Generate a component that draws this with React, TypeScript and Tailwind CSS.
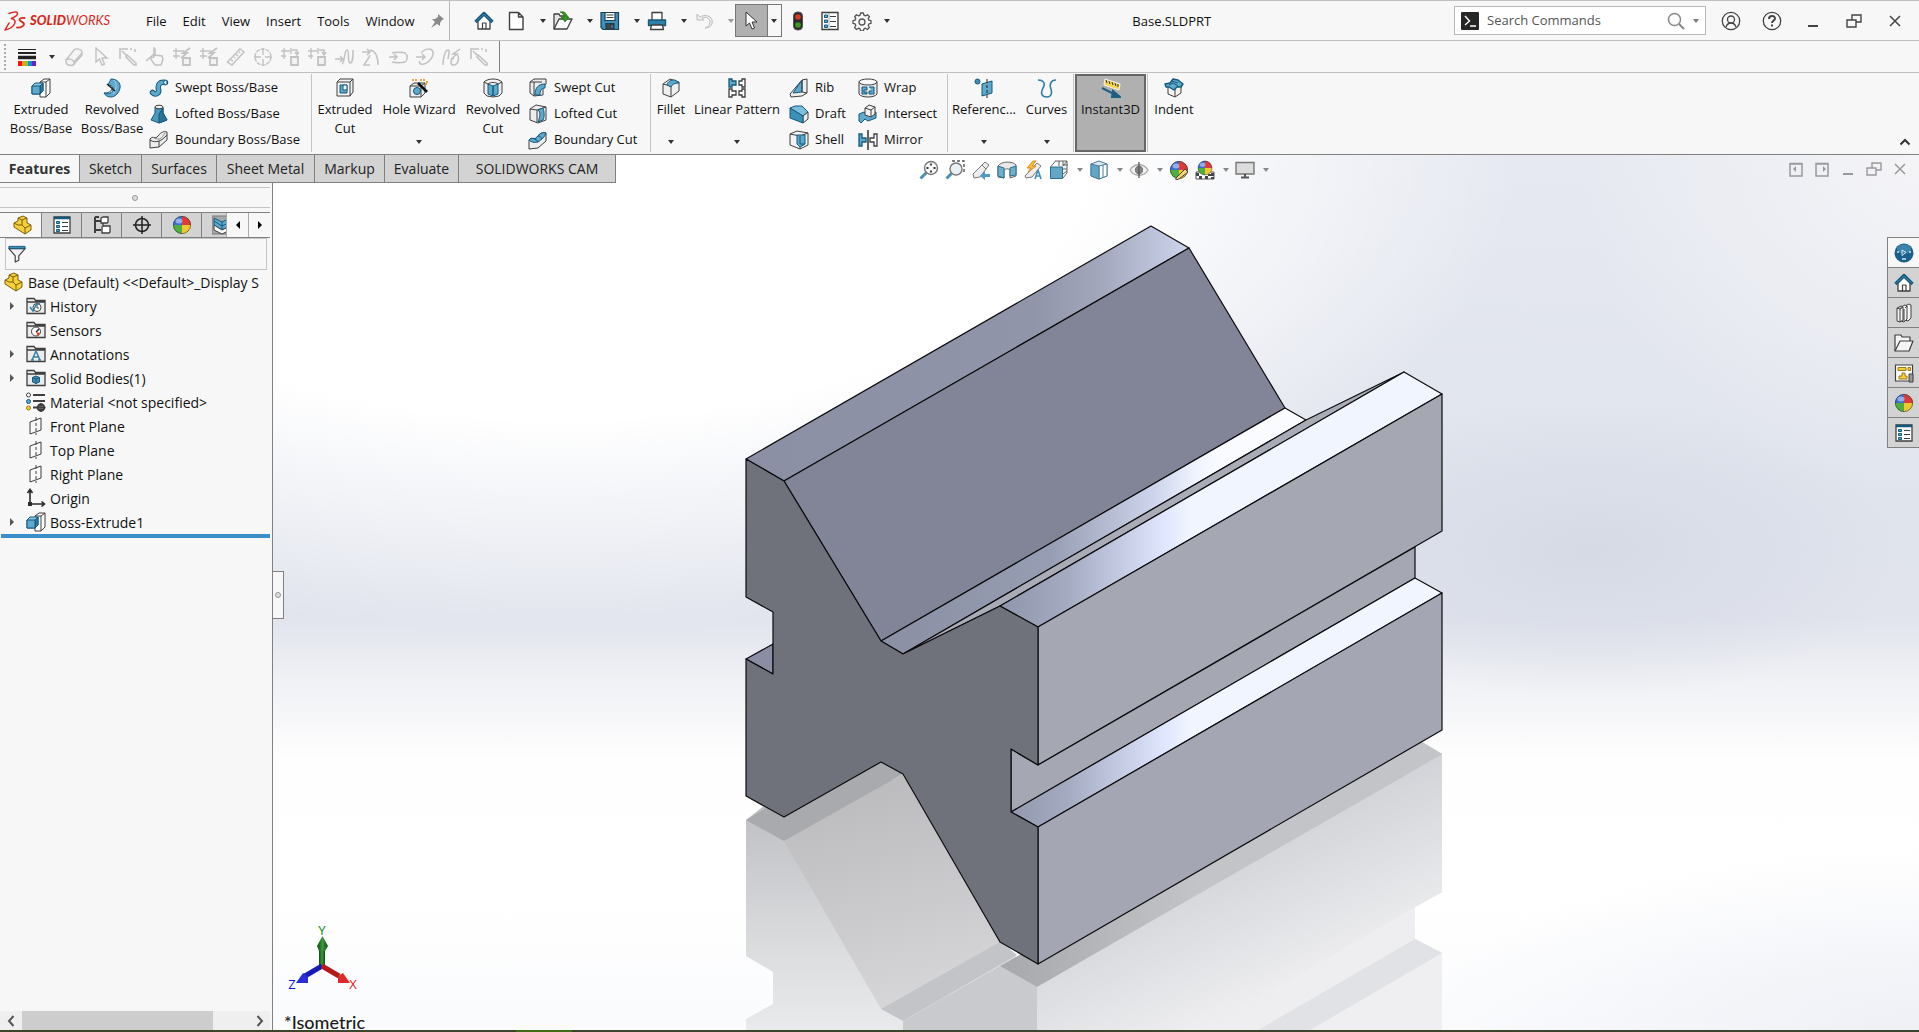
import { type ReactNode } from 'react'
import clsx from 'clsx'

const line = '#3f3f3f'
const blue = '#5fa9cc'
const navy = '#14597c'

const box = (
  <g stroke={line} strokeLinejoin="round">
    <path d="M9 4l4-3h6v14l-4 4H9z" fill="#fdfdfd" />
    <path d="M15 4v15M9 4h6l4-3" fill="none" />
    <g stroke={navy}>
      <path d="M1 8l3-3h8v8l-3 3H1z" fill="#8cc8e2" />
      <path d="M9 8l3-3v8l-3 3z" fill="#2f7ba3" />
      <path d="M1 8h8v8H1z" fill={blue} />
    </g>
  </g>
)

const house = (
  <g strokeLinejoin="round">
    <path d="M4 10v8h12v-8l-6-6z" fill="#fff" stroke={line} strokeWidth="1.3" />
    <path d="M8.500 18v-6h3.500v6" fill="none" stroke={line} strokeWidth="1.200" />
    <path d="M1.500 11L10 2.500l8.500 8.500" fill="none" stroke={navy} strokeWidth="3.200" />
    <path d="M2.500 10L10 3l7.500 7" fill="none" stroke="#3d8fb9" strokeWidth="1" />
  </g>
)

const part = (
  <g fill="#f6cf3c" stroke="#7d5f0a" strokeLinejoin="round">
    <path d="M1 8l4-2V3l5-2 4 2v5l4 2v5l-6 4-11-7z" />
    <path d="M5 3l4 2 5-2M9 5v5l3 3 6-3M12 13v6M1 8l4 2 4 0" fill="none" />
  </g>
)

const ball = (
  <g>
    <path d="M10 10V1a9 9 0 0 1 9 9z" fill="#e03a36" />
    <path d="M10 10h9a9 9 0 0 1-9 9z" fill="#f2c832" />
    <path d="M10 10v9a9 9 0 0 1-9-9z" fill="#4caf3f" />
    <path d="M10 10H1a9 9 0 0 1 9-9z" fill="#3b6fd6" />
    <circle cx="10" cy="10" r="8.600" fill="none" stroke="#333" strokeOpacity=".6" />
    <ellipse cx="7" cy="6" rx="3.500" ry="2.500" fill="#fff" opacity=".45" />
  </g>
)

const folder = <path d="M1 17.500V2.500h7l1.500 2h9.500v13z M1 6h18" fill="#ececec" stroke={line} strokeWidth="1.300" />

const list = (
  <g stroke={line}>
    <path d="M2 2h16v16H2z" fill="#fff" strokeWidth="1.300" />
    <path d="M2 3h16" stroke={navy} strokeWidth="2.500" />
    <path d="M4.500 6.500h3v2h-3zM4.500 10.500h3v2h-3zM4.500 14.500h3v2h-3z" fill={blue} stroke={navy} />
    <path d="M10 7.500h6M10 11.500h6M10 15.500h6" />
  </g>
)

const plane = (
  <g fill="none" stroke={line}>
    <path d="M4 6l11-4v12L4 18z" fill="#f8f8f8" />
    <path d="M10 1v4M10 7v3M10 12v3M10 17v2" />
  </g>
)

const trimSquares = (
  <g fill="none" stroke="currentColor" strokeWidth="1.400">
    <path d="M1 4h9M4 1v11M1 9h5M11 1v6M12 3h5v4M15 5l2 3 2-3" />
    <path d="M11 10h7v8h-7z" fill="#f2f2f2" strokeWidth="1.800" />
  </g>
)

const pencil = (
  <g fill="none" stroke="currentColor" strokeWidth="1.600">
    <path d="M2 12V2h8M12 2h2M17 2v3M4 4l5 5M9 8l9 8v2h-2L8 10z" />
  </g>
)

const icons: Record<string, ReactNode> = {
  box,
  house,
  part,
  ball,
  list,
  plane,
  trimSquares,
  pencil,
  revolve: (
    <g stroke={navy} strokeLinejoin="round">
      <path d="M9 1c6 0 10 4 9 9s-5 9-9 9-6-2-7-4c4 2 9 0 9-4 0-3-3-4-5-4z" fill={blue} />
      <path d="M12 2c3 3 3 9-1 14" fill="none" stroke="#9fd3ea" />
      <path d="M5 6l8 7" stroke="#222" strokeWidth="1.500" />
      <path d="M2 15c4 0 7-1 8-4" fill="none" />
    </g>
  ),
  sweep: (
    <g fill="none" strokeLinecap="round">
      <path d="M3.500 14.500c3 3 7 1 6-3-1-5 1-8 7-7" stroke={navy} strokeWidth="5.500" />
      <path d="M3.500 14.500c3 3 7 1 6-3-1-5 1-8 7-7" stroke={blue} strokeWidth="3.500" />
      <ellipse cx="16.500" cy="4.500" rx="1.800" ry="2.200" fill="#d9eef7" stroke={navy} />
    </g>
  ),
  loft: (
    <g stroke={navy} strokeLinejoin="round">
      <path d="M6 3v6l-4 7 8 3 8-3-4-7V3z" fill="#4b97bd" />
      <path d="M10 10v9l8-3-4-7V4z" fill="#2d7396" />
      <ellipse cx="10" cy="3" rx="4" ry="1.800" fill="#eee" stroke={line} />
    </g>
  ),
  boundary: (
    <g stroke={line} fill="#ededed" strokeLinejoin="round">
      <path d="M1 9c3-4 5 1 8-3 3-4 6-5 9-4v8l-8 7-9 1z" />
      <path d="M1 10c3 2 6 2 9 1M10 11v6M10 11c3-1 5-3 8-6" fill="none" />
      <path d="M4 7c2 2 4 2 6 2s4-3 6-6" fill="none" stroke="#8a8a8a" />
    </g>
  ),
  boundaryCut: (
    <g stroke={line} fill="#ededed" strokeLinejoin="round">
      <path d="M1 10c3-4 5 1 8-3 3-4 6-5 9-4v8l-8 7-9 1z" />
      <path d="M1 10c3-4 5 1 8-3 3-4 6-5 9-4-1 4-5 7-8 9-4 1-7 0-9-2z" fill={blue} stroke={navy} />
      <path d="M5 8c2 2 4 1 5 4M10 6c2 0 3 1 4 3" fill="none" stroke={navy} />
    </g>
  ),
  cut: (
    <g stroke={line} strokeLinejoin="round">
      <path d="M2 4l3-3h13v13l-3 4H2z" fill="#f4f4f4" />
      <path d="M2 4h13v14M15 4l3-3" fill="none" />
      <path d="M5 7h7v8H5z" fill={blue} stroke={navy} />
      <path d="M8 7h4v5H8z" fill="#eef8fc" stroke={navy} />
    </g>
  ),
  wizard: (
    <g stroke={line} strokeLinejoin="round">
      <path d="M1 8l4-3h11v10l-4 4H1z" fill="#ececec" />
      <path d="M1 8h11v11M12 8l4-3" fill="none" />
      <circle cx="8" cy="13" r="3.500" fill={blue} stroke={navy} />
      <path d="M9 5l9 9" stroke="#111" strokeWidth="2.600" />
      <path d="M3 2h2M7 1v2M11 2h2M15 1v2M18 3v2M16 6h2" stroke="#e0901c" strokeWidth="1.600" />
    </g>
  ),
  revolveCut: (
    <g stroke={line} strokeLinejoin="round">
      <path d="M1 4c4-4 14-4 18 0v11l-3 3-6 1-6-1-3-3z" fill="#f1f1f1" />
      <path d="M5 6l5 2v10l-5-2zM15 6l-5 2v10l5-2z" fill={blue} stroke={navy} />
      <path d="M1 4l4 2M19 4l-4 2M5 6c2-2 8-2 10 0" fill="none" />
    </g>
  ),
  sweptCut: (
    <g stroke={line} strokeLinejoin="round">
      <path d="M2 4l4-3h12v5l-3 3v8l-9 1-4-3z" fill="#ededed" />
      <path d="M7 17c0-7 3-11 10-11v4c-4 0-5 3-5 7z" fill={blue} stroke={navy} />
      <path d="M2 4h12M6 4v14" fill="none" />
    </g>
  ),
  loftCut: (
    <g stroke={line} strokeLinejoin="round">
      <path d="M2 5l6-4 10 2v13l-8 3-8-3z" fill="#ededed" />
      <path d="M2 5l7 1v12M9 6l9-3" fill="none" />
      <path d="M10 6c3 2 2 7 0 12l5-2c2-4 1-9 0-12z" fill={blue} stroke={navy} />
    </g>
  ),
  fillet: (
    <g stroke={line} strokeLinejoin="round">
      <path d="M2 6l7-5 9 3v9l-8 6-8-3z" fill="#efefef" />
      <path d="M2 6l8 2v11" fill="none" />
      <path d="M6 7c1-4 4-5 8-5l4 3c-4 0-7 1-8 4z" fill={blue} stroke={navy} />
    </g>
  ),
  linearPattern: (
    <g fill="#fff" stroke={line} strokeWidth="1.300">
      <path d="M2 1h3v2h4v4H5v2H2z" fill={blue} stroke={navy} />
      <path d="M18 1v8h-3V7h-3V3h3V1zM2 11h3v2h4v4H5v2H2zM18 11v8h-3v-2h-3v-4h3v-2z" />
    </g>
  ),
  rib: (
    <g stroke={line} strokeLinejoin="round">
      <path d="M13 2l5-1v14l-5 3-11 1-1-3z" fill="#ededed" />
      <path d="M4 15L13 2v12z" fill={blue} stroke={navy} />
      <path d="M13 2v12l5 1" fill="none" />
    </g>
  ),
  draft: (
    <g stroke={navy} strokeLinejoin="round">
      <path d="M1 4l5-2h7l6 6-5 4z" fill="#7cc0de" />
      <path d="M14 12l5-4v7l-5 4z" fill="#ededed" stroke={line} />
      <path d="M1 4l13 8v7L1 14z" fill="#3c8fb7" />
    </g>
  ),
  shell: (
    <g stroke={line} strokeLinejoin="round">
      <path d="M1 4l7-3 11 2v12l-8 4-10-4z" fill="#f3f3f3" />
      <path d="M1 4l10 2v13M11 6l8-3" fill="none" />
      <path d="M8 5h8v9l-5 3-3-3z" fill={blue} stroke={navy} />
      <path d="M11 6v8l5 0" fill="none" stroke={navy} />
    </g>
  ),
  wrap: (
    <g stroke={line}>
      <path d="M1 4v12c2 4 16 4 18 0V4z" fill="#e9e9e9" />
      <ellipse cx="10" cy="4" rx="9" ry="3" fill="#f8f8f8" />
      <path d="M4 9h5v3H6v2h3v2H4zM11 9h5v7h-5v-3h3" fill={blue} stroke={navy} />
    </g>
  ),
  intersect: (
    <g stroke={line} strokeLinejoin="round">
      <path d="M1 10l5-2 4 3 8-3v6l-8 3-3-2-4 4-2-2z" fill={blue} stroke={navy} />
      <path d="M7 4l4-3 6 2v7l-4 3-6-2z" fill="#f3f3f3" />
      <path d="M7 4l6 2v7M13 6l4-3" fill="none" />
    </g>
  ),
  mirror: (
    <g stroke={line} strokeWidth="1.300">
      <path d="M1 4h3v4h4v4H4v4H1z" fill={blue} stroke={navy} />
      <path d="M10 0v20" stroke="#111" />
      <path d="M19 4v12h-3v-4h-4V8h4V4z" fill="#fff" />
    </g>
  ),
  reference: (
    <g stroke={navy}>
      <circle cx="3.500" cy="3.500" r="2.500" fill="#3f8fb8" />
      <path d="M8 6l10-3v12L8 18z" fill={blue} />
      <path d="M13 1v4M13 7v3M13 12v3M13 17v3" stroke="#222" />
    </g>
  ),
  curves: (
    <g fill="none" stroke="#2e7ea8" strokeWidth="1.600">
      <path d="M1 2c5 0 8 3 5 8-3 6-1 9 4 9 5 0 5-5 4-8-2-5 0-9 5-9" />
    </g>
  ),
  instant: (
    <g>
      <path d="M4 1l15 5-1 6L3 7z" fill="#f8d548" stroke="#f3f3f3" />
      <path d="M5 2l1 3M8 3l1 3M11 4l1 3M14 5l1 3M17 6l0 3" stroke="#333" />
      <path d="M1 10l12 6M12 13l7 6h-8z" fill="#1d5f85" stroke="#1d5f85" strokeWidth="2" />
    </g>
  ),
  indent: (
    <g stroke={line} strokeLinejoin="round">
      <path d="M4 8v8l7 3 6-4V7z" fill="#f2f2f2" />
      <path d="M11 10v9" />
      <path d="M1 6l5-1 3-4 5 1 5 4-2 3-4 0-3 3-5-3-3 0z" fill={blue} stroke={navy} strokeWidth="1.400" />
      <path d="M5 7l4-2 5 3M8 3l6 2" fill="none" stroke={navy} />
    </g>
  ),
  newDoc: (
    <path d="M3.500 1.500h9l4.500 4.500v12.500H3.500zM12.500 1.500V6H17" fill="#fff" stroke={line} strokeWidth="1.400" strokeLinejoin="round" />
  ),
  open: (
    <g stroke={line} strokeLinejoin="round">
      <path d="M1 18V3h5l1 2h7v4" fill="#e6e6e6" strokeWidth="1.300" />
      <path d="M1 18l5-10h13l-5 10z" fill="#fafafa" strokeWidth="1.300" />
      <path d="M7 1c4-1 7 1 7 5h2l-4 5-4-5h3c0-2-1-4-4-5z" fill="#2f9a1c" stroke="#1f6d12" strokeWidth=".6" />
    </g>
  ),
  save: (
    <g stroke="#1c3f55" strokeWidth="1.200">
      <path d="M1 1.500h17.500V18.500H3L1 16.500z" fill="#3f8fb8" />
      <path d="M5 1.500h10v8H5z" fill="#fff" />
      <path d="M6.500 4h7M6.500 6.500h7" stroke={line} />
      <path d="M6 12.500h8v6H6z" fill="#444" />
      <path d="M11 14h2v3h-2z" fill="#cfe6f2" />
    </g>
  ),
  print: (
    <g stroke={line} strokeLinejoin="round">
      <path d="M5 9V1.500h10V9" fill="#fff" strokeWidth="1.300" />
      <path d="M1.500 9h17v5.500h-17z" fill="#2f81a8" stroke={navy} strokeWidth="1.400" />
      <path d="M4.500 14h11l1 4.500h-13z" fill="#fff" strokeWidth="1.300" />
    </g>
  ),
  undo: (
    <path d="M3 3v6h7L8 7c5-2 8 1 8 4s-2 5-5 6c8 0 9-8 5-11-3-2-7-2-10 0z" fill="#efefef" stroke="#bcbcbc" />
  ),
  cursor: <path d="M5 1v14l3.500-3 2.500 6 2.500-1-2.500-6h5z" fill="#fff" stroke="#333" strokeLinejoin="round" />,
  traffic: (
    <g>
      <rect x="5.500" y="1" width="9" height="18" rx="4" fill="#2b2b2b" stroke="#555" />
      <circle cx="10" cy="6" r="2.800" fill="#e0381c" />
      <circle cx="10" cy="14" r="2.800" fill="#3f9a24" />
    </g>
  ),
  options: (
    <g stroke={line}>
      <path d="M2 1.500h16v17H2z" fill="#fff" strokeWidth="1.400" />
      <path d="M4.500 4h3v2.500h-3zM4.500 9h3v2.500h-3zM4.500 14h3v2.500h-3z" fill={blue} stroke={navy} />
      <path d="M10 5.500h6M10 10.500h6M10 15.500h6" />
      <path d="M9 2v16" stroke="#aaa" />
    </g>
  ),
  gear: (
    <g fill="none" stroke="#555" strokeWidth="1.300" strokeLinejoin="round">
      <path d="M8.600 2h2.800l.5 2.200 1.600.7 2-1.200 2 2-1.300 1.900.7 1.600 2.100.5v2.700l-2.100.5-.7 1.600 1.200 2-2 2-1.900-1.300-1.600.7-.5 2.100H8.600l-.5-2.100-1.600-.7-2 1.300-1.900-2 1.200-2-.7-1.600L1 12.400V9.700l2.100-.5.7-1.600-1.200-1.900 1.900-2 2 1.200 1.600-.7z" />
      <circle cx="10" cy="11" r="3" />
    </g>
  ),
  lineStyle: (
    <g>
      <path d="M1 2.500h18" stroke="#222" strokeWidth="1" />
      <path d="M1 6h18" stroke="#222" strokeWidth="2" />
      <path d="M1 10.500h18" stroke="#222" strokeWidth="3.500" />
      <path d="M1 14h4v5H1z" fill="#f01414" />
      <path d="M5 14h3v5H5z" fill="#f59a0c" />
      <path d="M8 14h3v5H8z" fill="#8bc63e" />
      <path d="M11 14h4v5h-4z" fill="#188ac8" />
      <path d="M15 14h4v5h-4z" fill="#6a1fd0" />
    </g>
  ),
  eraser: (
    <g fill="#f4f4f4" stroke="currentColor" strokeWidth="1.400" strokeLinejoin="round">
      <path d="M2 13L10 3c1-2 8-1 8 2v3l-8 9c-2 3-8 1-8-2z" />
      <path d="M2 13c2-2 7-1 8 2l8-9M10 15v3" fill="none" />
    </g>
  ),
  arrow: <path d="M5 1v14l3.500-3 2.500 6 2.500-1-2.500-6h5z" fill="none" stroke="currentColor" strokeWidth="1.400" />,
  hand: (
    <g fill="none" stroke="currentColor" strokeWidth="1.500">
      <path d="M1 14l9-8M9 1v9l-4 1 5 7h6l2-6-1-3-7-1V2z" />
    </g>
  ),
  ruler: <path d="M1.500 15L14 2l4 3L6 18zM5 13l2 1M8 10l1 1M10 7l2 2M13 5l1 1" fill="none" stroke="currentColor" strokeWidth="1.500" />,
  ring: (
    <g fill="none" stroke="currentColor" strokeWidth="1.400">
      <circle cx="10" cy="10" r="8" strokeDasharray="4 1" />
      <path d="M10 1v7M10 12v7M1 10h7M12 10h7" />
    </g>
  ),
  trimCurve: (
    <g fill="none" stroke="currentColor" strokeWidth="1.500">
      <path d="M1 12h7M6 9l3 3-3 3M8 17c3-1 2-14 5-14s0 13 3 13 3-6 3-13" />
    </g>
  ),
  arcCurve: (
    <g fill="none" stroke="currentColor" strokeWidth="1.500">
      <path d="M1 5h8M6 2l3 3-3 3M9 3c6 1 8 7 8 15M9 8c-1 4-4 6-6 10h6" />
    </g>
  ),
  slot: (
    <g fill="none" stroke="currentColor" strokeWidth="1.500">
      <path d="M4 6c2-1 11-1 13 0 3 2 3 7 0 9-3 1-10 1-13 0M1 10h8M6 7l3 3-3 3" />
    </g>
  ),
  oval: (
    <g fill="none" stroke="currentColor" strokeWidth="1.500">
      <path d="M1 10h9M7 7l3 3-3 3M6 6c4-5 11-5 12-1s-4 11-9 12-5-2-4-3" />
    </g>
  ),
  scribble: (
    <g fill="none" stroke="currentColor" strokeWidth="1.500">
      <path d="M1 18c0-6 2-15 5-15 2 0 1 3 0 9M18 2l-7 5h4l-6 5" />
      <path d="M15 8c3 2 1 10-3 10s-4-6 0-7" />
    </g>
  ),
  trimFlash: (
    <g fill="none" stroke="currentColor" strokeWidth="1.400">
      <path d="M1 4h11M4 1v11M1 9h7" />
      <path d="M11 11h7v7h-7z" fill="#f2f2f2" strokeWidth="1.800" />
      <path d="M18 1l-7 5h4l-6 5" strokeWidth="1.800" />
    </g>
  ),
  zoomFit: (
    <g fill="none" stroke="#777" strokeWidth="1.400">
      <path d="M1.500 18.500l6-6" stroke="#4f8fb0" strokeWidth="3" />
      <circle cx="12" cy="8" r="6.500" fill="#f8f8f8" />
      <path d="M12 3.500v2M12 10.500v2M7.500 8h2M14.500 8h2" stroke="#333" strokeWidth="1.800" />
    </g>
  ),
  zoomArea: (
    <g fill="none" stroke="#777" strokeWidth="1.400">
      <path d="M7 1h12v12" strokeDasharray="3 2" stroke="#555" />
      <path d="M1.500 18.500l5-5" stroke="#4f8fb0" strokeWidth="3" />
      <circle cx="11" cy="9" r="6" fill="#eaf0f4" />
    </g>
  ),
  prevView: (
    <g stroke="#777" strokeLinejoin="round">
      <path d="M2 14L14 2l4 3-9 12-6 1z" fill="#ededed" />
      <path d="M11 5l4 4" fill="none" />
      <path d="M19 14h-5v-3l-5 5 5 4v-3h5z" fill="#4f9bc4" stroke="none" />
    </g>
  ),
  section: (
    <g stroke="#666" strokeLinejoin="round">
      <path d="M1 6c3-5 15-5 18-1v11l-6 2v-8c-2-2-5-1-6 0v8l-6-1z" fill="#e8e8e8" />
      <path d="M1 6l6 2v10l-6-2zM19 6l-6 2v8l6-1z" fill="#6fb0cf" stroke="#2e6d8c" />
    </g>
  ),
  dynView: (
    <g strokeLinejoin="round">
      <path d="M2 16L14 3l4 3-9 11-6 1z" fill="#ededed" stroke="#777" />
      <path d="M10 1L4 8h4l-3 4 8-6H9l4-5z" fill="#f9c23a" stroke="#d98a1a" />
      <path d="M12 19l3-9 3 9M13 16h4" fill="none" stroke="#3f8fb8" strokeWidth="1.600" />
    </g>
  ),
  orient: (
    <g stroke="#666">
      <path d="M6 1h12v12l-4 5" fill="#f5f5f5" />
      <path d="M10 1v5M14 1v5M14 5h5M14 9h4M14 6l4-5M14 14l4-3" fill="none" />
      <path d="M1.500 7h12v11.500h-12z" fill="#63a7c7" stroke="#2e6d8c" />
      <path d="M1.500 7l5-6" />
    </g>
  ),
  style: (
    <g stroke="#4a7d96" strokeLinejoin="round">
      <path d="M2 4l8-3 8 3v12l-8 3-8-3z" fill="#d7e9f1" />
      <path d="M10 6l8-2v12l-8 3z" fill="#fff" />
      <path d="M2 4l8 2v13l-8-3z" fill="#63a7c7" />
      <path d="M14 5v12" fill="none" />
    </g>
  ),
  eye: (
    <g fill="none" stroke="#888" strokeWidth="1.300">
      <path d="M1 10c4-7 14-7 18 0-4 7-14 7-18 0z" fill="#f2f2f2" stroke="#aaa" />
      <circle cx="10" cy="10" r="3.500" fill="#888" stroke="#777" />
      <path d="M10 2v16" stroke="#555" />
    </g>
  ),
  ballPencil: (
    <g>
      {ball}
      <path d="M7 18l9-9 3 3-9 7-3 1z" fill="#f5d675" stroke="#444" />
    </g>
  ),
  scene: (
    <g>
      <path d="M1 12h18v7H1z" fill="#fff" stroke="#555" />
      <path d="M1 13h3v3H1zM16 13h3v3h-3zM4 16h3v3H4zM10 16h3v3h-3zM13 14h3v2h-3zM16 17h3v2h-3z" fill="#444" />
      <g transform="translate(2 0) scale(.8)">{ball}</g>
    </g>
  ),
  monitor: (
    <g stroke="#777" strokeWidth="1.400">
      <path d="M1 2.500h18v11.500H1z" fill="#dcdcdc" />
      <path d="M10 14v3M6 17.500h8" stroke="#555" strokeWidth="2" />
    </g>
  ),
  config: (
    <g fill="#fff" stroke={line} strokeWidth="1.300">
      <path d="M3 2v16M3 6h6M3 15h6M3 2h4" fill="none" strokeWidth="2" />
      <path d="M9 3l2-1h5v5l-1 1H9zM10 12l2-1h6v6l-1 1h-7zM11 8v4" />
    </g>
  ),
  target: (
    <g fill="none" stroke="#222" strokeWidth="1.500">
      <circle cx="10" cy="10" r="6.500" />
      <path d="M10 1v18M1 10h18" />
    </g>
  ),
  cam: (
    <g stroke={navy}>
      <path d="M0 1h20v18H0z" fill="#a4a9ad" stroke="#777" />
      <path d="M2 3l8 4 8-4v8l-8 4-8-5z" fill={blue} />
      <path d="M2 10l8 5 8-4v4l-8 4-8-4z" fill="#fff" stroke={line} />
      <path d="M10 7v8M2 6l8 5 8-4" fill="none" />
    </g>
  ),
  filter: (
    <g stroke={line} strokeLinejoin="round">
      <path d="M1 4l7 8v7l4-2v-5l7-8z" fill="#f3f3f3" strokeWidth="1.300" />
      <path d="M1 1.500h18v2.500H1z" fill="#3f8fb8" stroke={navy} />
    </g>
  ),
  history: (
    <g>
      {folder}
      <circle cx="11" cy="11.500" r="4" fill="#fff" stroke={line} />
      <path d="M11 9v3h2" fill="none" stroke={line} />
      <path d="M4 11l3 4 2-4a4 4 0 0 1 5-3" fill="none" stroke="#2f81a8" strokeWidth="1.500" />
    </g>
  ),
  sensors: (
    <g>
      {folder}
      <circle cx="10" cy="11.500" r="4.500" fill="#fff" stroke={line} />
      <path d="M10 12l3-3" stroke="#222" strokeWidth="1.500" />
      <path d="M10 12l4 1-2 3z" fill="#e03a1c" />
    </g>
  ),
  annotations: (
    <g>
      {folder}
      <path d="M6 16l4-9 4 9M7.500 13h5M5 16h3M12 16h3" fill="none" stroke="#2f81a8" strokeWidth="1.500" />
    </g>
  ),
  bodies: (
    <g>
      {folder}
      <path d="M6.500 9.500l3.500-1.500 3.500 1.500v4.500L10 15.500 6.500 14z" fill="#3f8fb8" stroke={navy} />
      <path d="M6.500 9.500l3.500 1.500 3.500-1.500M10 11v4.500" fill="none" stroke={navy} />
    </g>
  ),
  material: (
    <g stroke={line}>
      <circle cx="2.500" cy="3" r="2" fill="#fff" />
      <circle cx="2.500" cy="9.500" r="2" fill={blue} stroke={navy} />
      <circle cx="2.500" cy="16" r="2" fill="#f6cf3c" stroke="#9a7a14" />
      <path d="M7 3h12M7 9h12M7 15.500h5" strokeWidth="1.800" />
      <circle cx="15" cy="15.500" r="3" fill="#fff" strokeWidth="2.500" />
      <path d="M15 11v9M10.500 15.500h9" strokeWidth="1.600" />
    </g>
  ),
  origin: (
    <g fill="none" stroke="#2b2b2b" strokeWidth="1.600">
      <path d="M4 2v14h14M1.500 5L4 1.500 6.500 5M15.500 13.500L18.500 16l-3 2.500" />
      <path d="M2 14h4v4H2z" fill="#2b2b2b" stroke="none" />
    </g>
  ),
  globe: (
    <g>
      <circle cx="10" cy="10" r="9.500" fill="#1c5f8a" />
      <ellipse cx="10" cy="6" rx="7" ry="4.500" fill="#4d93bb" opacity=".7" />
      <path d="M8 7l4 2.500-4 3z" fill="none" stroke="#cfe6f2" />
      <path d="M3 9h2M15 9h2M8 16h4" stroke="#cfe6f2" strokeWidth="1.500" />
    </g>
  ),
  library: (
    <g fill="#f5f5f5" stroke={line} strokeLinejoin="round">
      <path d="M11 3l4-2 2 1v13l-3 3-3-1z" />
      <path d="M7 4l4-2 2 1v13l-3 3-3-1zM11 5l2-2M10 6v12" />
      <path d="M3 5l4-2 2 1v13l-3 2-3-1zM6 6v13M3 5l3 1 3-2" />
    </g>
  ),
  openFolder: (
    <g fill="#f5f5f5" stroke={line} strokeWidth="1.200" strokeLinejoin="round">
      <path d="M1 18V2h6l1 2h8v4" />
      <path d="M1 18l5-10h13l-4 10z" />
    </g>
  ),
  palette: (
    <g stroke={line}>
      <path d="M1.500 2h17v16h-17z" fill="#fff" strokeWidth="1.200" />
      <path d="M4 4.500h8v3H4zM14 4.500h2.500v3H14zM8 10h3v3h2v3H5v-3h3z" fill="#f6cf3c" stroke="#9a7a14" />
      <path d="M15 11h4v8h-4z" fill="#999" />
    </g>
  ),
}

function Icon({ name, className = 'h-5 w-5' }: { name: string; className?: string }) {
  return (
    <svg viewBox="0 0 20 20" className={clsx('shrink-0', className)} aria-hidden="true">
      {icons[name]}
    </svg>
  )
}

function Caret({ className = 'text-[#333]' }: { className?: string }) {
  return (
    <svg viewBox="0 0 6 4" className={clsx('h-1 w-1.5 shrink-0', className)} aria-hidden="true">
      <path d="M0 0h6L3 4z" fill="currentColor" />
    </svg>
  )
}

const menus = ['File', 'Edit', 'View', 'Insert', 'Tools', 'Window']

const quickTools = [
  { icon: 'newDoc', label: 'New' },
  { icon: 'open', label: 'Open' },
  { icon: 'save', label: 'Save' },
  { icon: 'print', label: 'Print' },
  { icon: 'undo', label: 'Undo' },
]

function Logo() {
  return (
    <div className="flex w-[146px] items-center pl-1 text-[#d9291c]">
      <svg viewBox="0 0 22 22" className="mr-1 h-[22px] w-[22px]" aria-hidden="true">
        <g fill="none" stroke="currentColor" strokeWidth="1.500" strokeLinecap="round" strokeLinejoin="round">
          <path d="M5 3.500c3-1.500 8-2 8.500-.5S11 7 7.500 8.500" />
          <path d="M7.500 8.500c3 .5 4.500 2.500 3 5.500-1.500 3-5 5-9.500 6l4-7" />
          <path d="M20.500 8c-3-.5-5.500.5-5 2s4.500 2 4.500 4-3.500 4-7 3.500" strokeWidth="1.800" />
        </g>
      </svg>
      <span className="font-['Lato'] text-[13px] leading-none italic">
        <b className="font-black">SOLID</b>WORKS
      </span>
    </div>
  )
}

function TitleBar() {
  return (
    <header className="flex h-[41px] items-stretch border-y border-[#c0c0c0]">
      <div className="flex items-center border-r border-[#b8b8b8]">
        <Logo />
        <nav className="flex gap-4 pt-0.5 text-[13px]">
          {menus.map((menu) => (
            <button key={menu} type="button">
              {menu}
            </button>
          ))}
        </nav>
        <button type="button" aria-label="Pin menu" className="pr-1 pl-3.5 text-[#8a8a8a]">
          <svg viewBox="0 0 16 16" className="h-4 w-4">
            <path d="M9 1l6 5-2 1-2 3 0 3-3-2-6 4 4-6-3-3h3l3-2z" fill="currentColor" />
          </svg>
        </button>
      </div>
      <div className="flex items-center pl-6">
        <button type="button" aria-label="Home" className="mr-3">
          <Icon name="house" />
        </button>
        {quickTools.map((tool) => (
          <div key={tool.label} className="flex w-[47px] items-center">
            <button type="button" aria-label={tool.label} className="mr-2.5">
              <Icon name={tool.icon} />
            </button>
            <button type="button" aria-label={`${tool.label} options`} className="p-1">
              <Caret className={tool.label === 'Undo' ? 'text-[#999]' : 'text-[#333]'} />
            </button>
          </div>
        ))}
        <div className="-ml-1.5 flex h-[33px] border border-[#777]">
          <button type="button" aria-label="Select" className="flex w-8 items-center justify-center border-r border-[#777] bg-[#b0b0b0]">
            <Icon name="cursor" />
          </button>
          <button type="button" aria-label="Select options" className="flex w-[13px] items-center justify-center">
            <Caret />
          </button>
        </div>
        <div className="ml-1.5 flex items-center gap-3">
          <button type="button" aria-label="Rebuild">
            <Icon name="traffic" />
          </button>
          <button type="button" aria-label="File properties">
            <Icon name="options" />
          </button>
          <button type="button" aria-label="Options">
            <Icon name="gear" />
          </button>
          <Caret />
        </div>
      </div>
      <h1 className="flex flex-1 items-center justify-center pt-0.5 text-[13px]">Base.SLDPRT</h1>
      <div className="flex items-center pr-1">
        <label className="flex h-[29px] w-[252px] items-center border border-[#b9b9b9] bg-white px-1.5">
          <svg viewBox="0 0 18 18" className="h-[18px] w-[18px] shrink-0">
            <rect width="18" height="18" rx="1" fill="#262626" />
            <path d="M4 4l4.500 5L4 13M9 14h6" fill="none" stroke="#fff" strokeWidth="1.400" />
          </svg>
          <input
            type="search"
            aria-label="Search Commands"
            placeholder="Search Commands"
            className="ml-2 w-full min-w-0 flex-1 bg-transparent text-[13px] outline-none placeholder:text-[#555]"
          />
          <svg viewBox="0 0 18 18" className="mr-2 h-[18px] w-[18px] shrink-0 text-[#888]">
            <circle cx="7.500" cy="7.500" r="6" fill="none" stroke="currentColor" strokeWidth="1.500" />
            <path d="M12 12l5 5" stroke="currentColor" strokeWidth="2" />
          </svg>
          <Caret className="text-[#777]" />
        </label>
        <div className="ml-1 flex text-[#444]">
          <button type="button" aria-label="Account" className="flex w-[41px] justify-center">
            <svg viewBox="0 0 20 20" className="h-5 w-5" fill="none" stroke="currentColor" strokeWidth="1.300">
              <circle cx="10" cy="10" r="8.700" />
              <circle cx="10" cy="8.500" r="3.500" />
              <path d="M5 16c1-3 3-4 5-4s4 1 5 4" />
            </svg>
          </button>
          <button type="button" aria-label="Help" className="flex w-[41px] justify-center">
            <svg viewBox="0 0 20 20" className="h-5 w-5" fill="none" stroke="currentColor" strokeWidth="1.300">
              <circle cx="10" cy="10" r="8.700" />
              <path d="M7 8c0-4 6-4 6-.5 0 2-3 2-3 4.500M10 13.500v2" strokeWidth="2" />
            </svg>
          </button>
          <WindowButtons className="flex w-[41px] items-center justify-center" />
        </div>
      </div>
    </header>
  )
}

function WindowButtons({ className }: { className: string }) {
  return (
    <>
      <button type="button" aria-label="Minimize" className={className}>
        <svg viewBox="0 0 16 16" className="h-4 w-4">
          <path d="M3 13h10" stroke="currentColor" strokeWidth="2" />
        </svg>
      </button>
      <button type="button" aria-label="Restore" className={className}>
        <svg viewBox="0 0 16 16" className="h-4 w-4" fill="none" stroke="currentColor" strokeWidth="1.400">
          <path d="M1 7h9v7H1zM6 7V2h9v7h-5" />
        </svg>
      </button>
      <button type="button" aria-label="Close" className={className}>
        <svg viewBox="0 0 16 16" className="h-4 w-4">
          <path d="M3 3l10 10M13 3L3 13" stroke="currentColor" strokeWidth="1.500" />
        </svg>
      </button>
    </>
  )
}

const sketchTools = [
  'eraser',
  'arrow',
  'pencil',
  'hand',
  'trimFlash',
  'trimFlash',
  'ruler',
  'ring',
  'trimSquares',
  'trimSquares',
  'trimCurve',
  'arcCurve',
  'slot',
  'oval',
  'scribble',
  'pencil',
]

function SketchBar() {
  return (
    <div className="flex h-8 border-b border-[#c0c0c0]">
      <div className="flex w-[500px] items-center border-r border-[#808080]">
        <span className="ml-1 h-[26px] border-l-2 border-dotted border-[#aaa]" />
        <button type="button" aria-label="Line format" className="ml-[11px]">
          <Icon name="lineStyle" />
        </button>
        <span className="ml-3 w-[11px]">
          <Caret />
        </span>
        {sketchTools.map((tool, i) => (
          <button key={i} type="button" disabled aria-label={tool} className="flex w-[27px] justify-center text-[#c2c2c2]">
            <Icon name={tool} />
          </button>
        ))}
      </div>
    </div>
  )
}

function BigTool({ icon, lines, width, caret, active }: { icon: string; lines: string[]; width: string; caret?: boolean; active?: boolean }) {
  return (
    <button
      type="button"
      className={clsx('flex h-[78px] shrink-0 flex-col items-center', width, active ? 'border-2 border-[#666] bg-[#b0b0b0] pt-0.5' : 'pt-1')}
    >
      <Icon name={icon} />
      <span className="pt-0.5 leading-[19px] whitespace-nowrap">
        {lines.map((text) => (
          <span key={text} className="block">
            {text}
          </span>
        ))}
      </span>
      {caret && (
        <span className="mt-auto pb-2">
          <Caret />
        </span>
      )}
    </button>
  )
}

function ToolColumn({ items, width }: { items: [string, string][]; width: string }) {
  return (
    <div className={clsx('flex shrink-0 flex-col pt-px', width)}>
      {items.map(([icon, label]) => (
        <button key={label} type="button" className="flex h-[26px] items-center gap-1.5 whitespace-nowrap">
          <Icon name={icon} />
          {label}
        </button>
      ))}
    </div>
  )
}

function Divider() {
  return <span className="h-[78px] w-px shrink-0 bg-[#c4c4c4]" />
}

function Ribbon() {
  return (
    <section className="flex h-[82px] border-b border-[#808080] pt-px text-[13px]">
      <BigTool icon="box" lines={['Extruded', 'Boss/Base']} width="ml-[3px] w-[76px]" />
      <BigTool icon="revolve" lines={['Revolved', 'Boss/Base']} width="w-[66px]" />
      <ToolColumn
        width="w-[166px] pl-1"
        items={[
          ['sweep', 'Swept Boss/Base'],
          ['loft', 'Lofted Boss/Base'],
          ['boundary', 'Boundary Boss/Base'],
        ]}
      />
      <Divider />
      <BigTool icon="cut" lines={['Extruded', 'Cut']} width="w-[66px]" />
      <BigTool icon="wizard" lines={['Hole Wizard']} width="w-[82px]" caret />
      <BigTool icon="revolveCut" lines={['Revolved', 'Cut']} width="w-[66px]" />
      <ToolColumn
        width="w-[124px] pl-0.5"
        items={[
          ['sweptCut', 'Swept Cut'],
          ['loftCut', 'Lofted Cut'],
          ['boundaryCut', 'Boundary Cut'],
        ]}
      />
      <Divider />
      <BigTool icon="fillet" lines={['Fillet']} width="w-10" caret />
      <BigTool icon="linearPattern" lines={['Linear Pattern']} width="w-[92px]" caret />
      <ToolColumn
        width="w-[69px] pl-1.5"
        items={[
          ['rib', 'Rib'],
          ['draft', 'Draft'],
          ['shell', 'Shell'],
        ]}
      />
      <ToolColumn
        width="w-[95px] pl-1.5"
        items={[
          ['wrap', 'Wrap'],
          ['intersect', 'Intersect'],
          ['mirror', 'Mirror'],
        ]}
      />
      <Divider />
      <BigTool icon="reference" lines={['Referenc...']} width="w-[72px]" caret />
      <BigTool icon="curves" lines={['Curves']} width="w-[53px]" caret />
      <Divider />
      <BigTool icon="instant" lines={['Instant3D']} width="mx-px w-[71px]" active />
      <Divider />
      <BigTool icon="indent" lines={['Indent']} width="w-[52px]" />
      <button type="button" aria-label="Collapse ribbon" className="mt-auto mr-2 mb-2 ml-auto">
        <svg viewBox="0 0 12 8" className="h-2 w-3">
          <path d="M1.500 6.500L6 2l4.500 4.500" fill="none" stroke="#333" strokeWidth="2" />
        </svg>
      </button>
    </section>
  )
}

// Part drawn in window coordinates, the origin being the window's top left corner
function Scene() {
  return (
    <svg
      viewBox="0 155 1919 875"
      preserveAspectRatio="xMinYMin slice"
      className="absolute inset-0 h-full w-full"
      role="img"
      aria-label="Isometric view of Base"
    >
      <defs>
        <linearGradient id="sky" gradientUnits="userSpaceOnUse" x1="0" y1="155" x2="0" y2="1030">
          <stop offset="0" stopColor="#e6e9f1" />
          <stop offset=".4" stopColor="#e0e4ed" />
          <stop offset=".53" stopColor="#e1e4ed" />
          <stop offset=".6" stopColor="#f0f1f5" />
          <stop offset=".69" stopColor="#fefefe" />
          <stop offset=".85" stopColor="#ffffff" />
          <stop offset="1" stopColor="#fafbfd" />
        </linearGradient>
        <radialGradient id="glow" gradientUnits="userSpaceOnUse" cx="0" cy="0" r="1" gradientTransform="translate(560 155) scale(960 480)">
          <stop offset="0" stopColor="#fff" />
          <stop offset=".55" stopColor="#fff" />
          <stop offset=".8" stopColor="#fff" stopOpacity=".45" />
          <stop offset="1" stopColor="#fff" stopOpacity="0" />
        </radialGradient>
        <radialGradient id="shade" gradientUnits="userSpaceOnUse" cx="0" cy="0" r="1" gradientTransform="translate(1590 550) scale(320 150)">
          <stop offset="0" stopColor="#d6dae5" />
          <stop offset="1" stopColor="#d6dae5" stopOpacity="0" />
        </radialGradient>
        <radialGradient id="corner" gradientUnits="userSpaceOnUse" cx="0" cy="0" r="1" gradientTransform="translate(1919 155) scale(340 340)">
          <stop offset="0" stopColor="#f4f4f7" />
          <stop offset="1" stopColor="#f4f4f7" stopOpacity="0" />
        </radialGradient>
        <radialGradient id="floor" gradientUnits="userSpaceOnUse" cx="0" cy="0" r="1" gradientTransform="translate(1919 1030) scale(500 180)">
          <stop offset="0" stopColor="#eef0f6" />
          <stop offset="1" stopColor="#eef0f6" stopOpacity="0" />
        </radialGradient>
        <linearGradient id="ridge" gradientUnits="userSpaceOnUse" x1="746" y1="0" x2="1189" y2="0">
          <stop offset="0" stopColor="#8b8fa3" />
          <stop offset=".65" stopColor="#9095a9" />
          <stop offset=".8" stopColor="#a2a7bc" />
          <stop offset="1" stopColor="#cdd4ec" />
        </linearGradient>
        <linearGradient id="shine" gradientUnits="userSpaceOnUse" x1="1000" y1="0" x2="1190" y2="0">
          <stop offset="0" stopColor="#8f95aa" />
          <stop offset=".35" stopColor="#a4aac0" />
          <stop offset=".7" stopColor="#cbd2ea" />
          <stop offset=".88" stopColor="#e1e8ff" />
          <stop offset="1" stopColor="#f1f5ff" />
        </linearGradient>
        <linearGradient id="valley" gradientUnits="userSpaceOnUse" x1="881" y1="0" x2="1220" y2="0">
          <stop offset="0" stopColor="#8a8fa3" />
          <stop offset=".5" stopColor="#979db2" />
          <stop offset=".8" stopColor="#ccd3ea" />
          <stop offset=".93" stopColor="#f0f4ff" />
          <stop offset="1" stopColor="#fafbff" />
        </linearGradient>
        <linearGradient id="mirrorLeft" gradientUnits="userSpaceOnUse" x1="0" y1="800" x2="0" y2="1030">
          <stop offset="0" stopColor="#bdbec2" />
          <stop offset=".6" stopColor="#d9dadc" />
          <stop offset="1" stopColor="#e9eaec" />
        </linearGradient>
        <linearGradient id="mirrorSlope" gradientUnits="userSpaceOnUse" x1="860" y1="780" x2="920" y2="1030">
          <stop offset="0" stopColor="#bbbbbe" />
          <stop offset=".7" stopColor="#d0d0d3" />
          <stop offset="1" stopColor="#dadadc" />
        </linearGradient>
        <linearGradient id="mirrorSide" gradientUnits="userSpaceOnUse" x1="1190" y1="850" x2="1260" y2="1010">
          <stop offset="0" stopColor="#d0d1d6" />
          <stop offset=".6" stopColor="#e2e3e6" />
          <stop offset="1" stopColor="#efeff1" />
        </linearGradient>
        <linearGradient id="mirrorEdge" gradientUnits="userSpaceOnUse" x1="1010" y1="0" x2="1200" y2="0">
          <stop offset="0" stopColor="#a9aaad" />
          <stop offset="1" stopColor="#c3c4c8" />
        </linearGradient>
        <linearGradient id="axisY" x1="0" y1="0" x2="1" y2="0">
          <stop offset="0" stopColor="#0d4a10" />
          <stop offset=".5" stopColor="#3a9a3d" />
          <stop offset="1" stopColor="#0d4a10" />
        </linearGradient>
      </defs>

      <g>
        <rect x="0" y="155" width="1919" height="875" fill="url(#sky)" />
        <rect x="0" y="155" width="1919" height="875" fill="url(#shade)" />
        <rect x="0" y="155" width="1919" height="875" fill="url(#corner)" />
        <rect x="0" y="155" width="1919" height="875" fill="url(#glow)" />
        <rect x="0" y="155" width="1919" height="875" fill="url(#floor)" />
      </g>

      <g>
        <path d="M746 820L784 790 880 762 1037 987 1422 742 1442 754V892L1415 907V939L1442 953V1030H746V1019L773 1004V972L746 956z" fill="url(#mirrorLeft)" />
        <path d="M784 841L903 774 1000 942 1010 955 881 1009z" fill="url(#mirrorSlope)" />
        <path d="M881 1009L1000 942 1017 955 903 1021z" fill="#c3c4c8" />
        <path d="M903 1021L1000 966 1037 987V1030H903z" fill="#c9cacd" />
        <path d="M746 820L784 797 881 762 903 774 784 841z" fill="#a9aaad" />
        <path d="M1037 987L1442 754V892L1415 907V939L1442 953V1030H1037z" fill="url(#mirrorSide)" />
        <path d="M1205 1030L1415 907V939L1258 1030z" fill="#eeeef0" />
        <path d="M1258 1030L1415 939 1442 953 1310 1030z" fill="#e1e2e5" />
        <path d="M1000 966L1037 945 1422 742 1442 754 1037 987z" fill="url(#mirrorEdge)" />
      </g>

      <g stroke="#0c0c0e" strokeWidth="1.200" strokeLinejoin="round">
        <path d="M746 459L1151 226 1189 248 784 481z" fill="url(#ridge)" />
        <path d="M784 481L1189 248 1285 408 881 641z" fill="#828598" />
        <path d="M881 641L1285 408 1306 420 903 654z" fill="url(#valley)" />
        <path d="M903 654L1306 420 1404 372 1000 606z" fill="#a9abb6" />
        <path d="M1000 606L1404 372 1442 394 1038 627z" fill="url(#shine)" />
        <path d="M1038 627L1442 394V531L1038 765z" fill="#a5a7b3" />
        <path d="M1011 749L1038 765 1415 547V578L1011 812z" fill="#a5a7b3" />
        <path d="M1011 812L1415 578 1442 593 1038 827z" fill="url(#shine)" />
        <path d="M1038 827L1442 593V730L1038 964z" fill="#a4a6b3" />
        <path d="M746 659L773 644V674z" fill="#8a8ea2" />
        <path
          d="M746 459L784 481 881 641 903 654 1000 606 1038 627V765L1011 749V812L1038 827V964L1000 942 903 774 881 762 784 817 746 796V659L773 674V612L746 597z"
          fill="#6f727b"
        />
      </g>

      <g>
        <path d="M319 948h6v20h-6z" fill="url(#axisY)" />
        <path d="M322.500 936l5.500 10-3 5h-6l-2-5z" fill="url(#axisY)" />
        <path d="M322 966l-17 10" stroke="#1a1ab5" strokeWidth="5" />
        <path d="M296 983l7-10 5 3v7z" fill="#2c2cd8" />
        <path d="M322 966l17 10" stroke="#b51a1a" strokeWidth="5" />
        <path d="M350 983l-7-10-5 3v7z" fill="#dd2a2a" />
        <g fontFamily="Open Sans, sans-serif" fontSize="13" textAnchor="middle">
          <text x="322" y="935" fill="#0a8a0a">
            Y
          </text>
          <text x="292" y="989" fill="#1414e0">
            Z
          </text>
          <text x="353" y="989" fill="#e01414">
            X
          </text>
        </g>
        <text x="284" y="1029" fontFamily="Lato, sans-serif" fontSize="18" fontWeight="500" fill="#1c1c1c">
          *Isometric
        </text>
      </g>
    </svg>
  )
}

const tabs = [
  { label: 'Features', width: 'w-20' },
  { label: 'Sketch', width: 'w-[62px]' },
  { label: 'Surfaces', width: 'w-[75px]' },
  { label: 'Sheet Metal', width: 'w-[98px]' },
  { label: 'Markup', width: 'w-[70px]' },
  { label: 'Evaluate', width: 'w-[74px]' },
  { label: 'SOLIDWORKS CAM', width: 'w-[157px]' },
]

const viewTools = [
  { icon: 'zoomFit', label: 'Zoom to fit' },
  { icon: 'zoomArea', label: 'Zoom to area' },
  { icon: 'prevView', label: 'Previous view' },
  { icon: 'section', label: 'Section view' },
  { icon: 'dynView', label: 'Dynamic annotation views' },
  { icon: 'orient', label: 'View orientation', caret: true },
  { icon: 'style', label: 'Display style', caret: true },
  { icon: 'eye', label: 'Hide or show items', caret: true },
  { icon: 'ballPencil', label: 'Edit appearance' },
  { icon: 'scene', label: 'Apply scene', caret: true },
  { icon: 'monitor', label: 'View settings', caret: true },
]

function TabRow() {
  return (
    <div className="relative flex h-7 justify-between">
      <div className="flex text-[14px]" role="tablist">
        {tabs.map((tab, i) => (
          <button
            key={tab.label}
            type="button"
            role="tab"
            aria-selected={i === 0}
            className={clsx(
              'h-7 border-r border-b border-[#808080] whitespace-nowrap',
              tab.width,
              i === 0 ? 'bg-[#f7f7f7] font-bold text-[#333]' : 'bg-[#d3d3d3] text-[#222]',
            )}
          >
            {tab.label}
          </button>
        ))}
      </div>
      <div className="flex items-center gap-1.5 pt-0.5">
        {viewTools.map((tool) => (
          <button key={tool.label} type="button" aria-label={tool.label} className="flex items-center gap-2">
            <Icon name={tool.icon} />
            {tool.caret && <Caret className="text-[#888]" />}
          </button>
        ))}
      </div>
      <div className="flex w-[348px] items-center justify-end pr-1.5 text-[#999]">
        {['M8 5v6L5 8z', 'M9 5v6l3-3z'].map((d) => (
          <button key={d} type="button" aria-label="Dock pane" className="flex w-[26px] justify-center">
            <svg viewBox="0 0 16 16" className="h-4 w-4">
              <path d="M2 2.500h12V15H2zM2 3h12" fill="none" stroke="currentColor" strokeWidth="1.500" />
              <path d={d} fill="currentColor" />
            </svg>
          </button>
        ))}
        <WindowButtons className="flex w-[26px] justify-center" />
      </div>
    </div>
  )
}

const tree = [
  { label: 'History', icon: 'history', expand: true },
  { label: 'Sensors', icon: 'sensors' },
  { label: 'Annotations', icon: 'annotations', expand: true },
  { label: 'Solid Bodies(1)', icon: 'bodies', expand: true },
  { label: 'Material <not specified>', icon: 'material' },
  { label: 'Front Plane', icon: 'plane' },
  { label: 'Top Plane', icon: 'plane' },
  { label: 'Right Plane', icon: 'plane' },
  { label: 'Origin', icon: 'origin' },
  { label: 'Boss-Extrude1', icon: 'box', expand: true },
]

const managers = ['part', 'list', 'config', 'target', 'ball']

function FeatureManager() {
  return (
    <aside className="flex w-[273px] shrink-0 flex-col border-r border-[#808080] bg-[#f7f7f7] pr-0.5">
      <div className="mt-1 flex h-[21px] items-center justify-center border-y border-[#c4c4c4]">
        <span className="h-1.5 w-1.5 rounded-full border border-[#999] bg-[#ddd]" />
      </div>
      <div className="mt-1 flex h-[26px] border-y border-[#808080]">
        {managers.map((name, i) => (
          <button
            key={name}
            type="button"
            aria-label={`${name} manager`}
            className={clsx(
              'flex items-center justify-center border-r border-[#808080]',
              i === 0 ? 'w-[42px] bg-[#f7f7f7] pl-1' : 'w-10 bg-[#d3d3d3]',
            )}
          >
            <Icon name={name} />
          </button>
        ))}
        <button type="button" aria-label="CAM manager" className="flex w-6 items-center justify-start overflow-hidden bg-[#d3d3d3] pl-2.5">
          <Icon name="cam" />
        </button>
        <button type="button" aria-label="Scroll tabs left" className="flex flex-1 items-center justify-center border-l border-[#aaa]">
          <svg viewBox="0 0 4 8" className="h-2 w-1">
            <path d="M4 0v8L0 4z" />
          </svg>
        </button>
        <button type="button" aria-label="Scroll tabs right" className="flex flex-1 items-center justify-center border-l border-[#aaa]">
          <svg viewBox="0 0 4 8" className="h-2 w-1">
            <path d="M0 0v8l4-4z" />
          </svg>
        </button>
      </div>
      <label className="mr-[3px] ml-[5px] flex h-8 items-center border border-[#c4c4c4] px-0.5">
        <Icon name="filter" className="h-[18px] w-[18px]" />
        <input type="text" aria-label="Filter tree" className="min-w-0 flex-1 bg-transparent pl-2 outline-none" />
      </label>
      <div className="text-[14px] whitespace-nowrap">
        <div className="flex h-6 items-center gap-1 pl-1">
          <Icon name="part" />
          Base (Default) &lt;&lt;Default&gt;_Display S
        </div>
        <ul>
          {tree.map((node) => (
            <li key={node.label} className="flex h-6 items-center">
              <span className="flex w-[26px] pl-2.5">
                {node.expand && (
                  <svg viewBox="0 0 4 8" className="h-2 w-1 text-[#555]">
                    <path d="M0 0v8l4-4z" fill="currentColor" />
                  </svg>
                )}
              </span>
              <Icon name={node.icon} />
              <span className="pl-1">{node.label}</span>
            </li>
          ))}
        </ul>
        <div className="ml-px h-1 bg-[#3a8fc9]" />
      </div>
      <div className="mt-auto flex h-[19px] items-center bg-[#efefef] text-[#555]">
        <button type="button" aria-label="Scroll left" className="flex w-[22px] justify-center">
          <svg viewBox="0 0 8 12" className="h-3 w-2">
            <path d="M6.500 1L2 6l4.500 5" fill="none" stroke="currentColor" strokeWidth="2" />
          </svg>
        </button>
        <span className="h-full w-[191px] bg-[#cdcdcd]" />
        <button type="button" aria-label="Scroll right" className="mr-1.5 ml-auto">
          <svg viewBox="0 0 8 12" className="h-3 w-2">
            <path d="M1.500 1L6 6l-4.500 5" fill="none" stroke="currentColor" strokeWidth="2" />
          </svg>
        </button>
      </div>
    </aside>
  )
}

const taskPanes = ['globe', 'house', 'library', 'openFolder', 'palette', 'ball', 'list']

export default function App() {
  return (
    <div className="flex h-screen flex-col overflow-hidden bg-[#f7f7f7] font-['Open_Sans','Noto_Sans',sans-serif] text-[#111]">
      <TitleBar />
      <SketchBar />
      <Ribbon />
      <main className="relative flex min-h-0 flex-1 flex-col overflow-hidden">
        <Scene />
        <TabRow />
        <div className="relative flex min-h-0 flex-1">
          <FeatureManager />
          <button
            type="button"
            aria-label="Collapse panel"
            className="mb-6 flex h-12 w-[11px] items-center justify-center self-center border border-l-0 border-[#808080] bg-[#f7f7f7]"
          >
            <span className="h-1.5 w-1.5 rounded-full border border-[#999] bg-[#ddd]" />
          </button>
          <div className="mt-[54px] ml-auto self-start border-t border-l border-[#808080]">
            {taskPanes.map((name, i) => (
              <button
                key={name}
                type="button"
                aria-label={`${name} pane`}
                className={clsx('flex h-[30px] w-[31px] items-center justify-center border-b border-[#808080]', i === 0 ? 'bg-[#f7f7f7]' : 'bg-[#d3d3d3]')}
              >
                <Icon name={name} />
              </button>
            ))}
          </div>
        </div>
      </main>
      <footer className="h-0.5 shrink-0 bg-[#3b452b]">
        <div className="ml-[516px] h-full w-14 bg-[#3f6b12]" />
      </footer>
    </div>
  )
}
